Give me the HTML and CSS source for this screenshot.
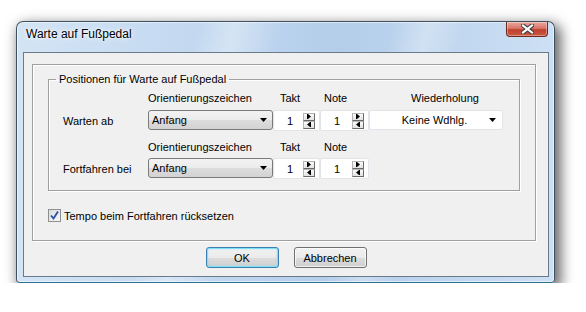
FILE: index.html
```html
<!DOCTYPE html>
<html lang="de">
<head>
    <meta charset="UTF-8">
    <title>Warte auf Fußpedal</title>
    <link rel="stylesheet" href="styles.css">
</head>
<body>
    <div class="window">
        <div class="titlebar">
            <span class="title">Warte auf Fußpedal</span>
            <div class="close">
                <svg width="13" height="10" viewBox="0 0 13 10">
                    <path d="M2 1.5 L11 8.5 M11 1.5 L2 8.5" stroke="#3b3b3b" stroke-width="4.2" stroke-linecap="square"/>
                    <path d="M2 1.5 L11 8.5 M11 1.5 L2 8.5" stroke="#fff" stroke-width="2.2" stroke-linecap="square"/>
                </svg>
            </div>
        </div>

        <div class="client">
            <div class="panel">
                <fieldset class="group">
                    <legend>Positionen für Warte auf Fußpedal</legend>

                    <div class="row head">
                        <span></span>
                        <span>Orientierungszeichen</span>
                        <span class="h-takt">Takt</span>
                        <span class="h-note">Note</span>
                        <span class="h-wdh">Wiederholung</span>
                    </div>
                    <div class="row ctl first">
                        <span class="lbl">Warten ab</span>
                        <div class="combo">
                            <span>Anfang</span>
                            <svg width="7" height="4" viewBox="0 0 7 4"><polygon points="0,0 7,0 3.5,4" fill="#000"/></svg>
                        </div>
                        <div class="spin">
                            <span class="val">1</span>
                            <div class="arrows">
                                <div class="arr"><svg width="4" height="5" viewBox="0 0 4 5"><polygon points="1,0 4,2.5 1,5" fill="#000"/><rect x="0" y="0" width="1" height="5" fill="#000"/></svg></div>
                                <div class="arr"><svg width="4" height="5" viewBox="0 0 4 5"><polygon points="3,0 0,2.5 3,5" fill="#000"/><rect x="3" y="0" width="1" height="5" fill="#000"/></svg></div>
                            </div>
                        </div>
                        <div class="spin">
                            <span class="val">1</span>
                            <div class="arrows">
                                <div class="arr"><svg width="4" height="5" viewBox="0 0 4 5"><polygon points="1,0 4,2.5 1,5" fill="#000"/><rect x="0" y="0" width="1" height="5" fill="#000"/></svg></div>
                                <div class="arr"><svg width="4" height="5" viewBox="0 0 4 5"><polygon points="3,0 0,2.5 3,5" fill="#000"/><rect x="3" y="0" width="1" height="5" fill="#000"/></svg></div>
                            </div>
                        </div>
                        <div class="combo white">
                            <span>Keine Wdhlg.</span>
                            <svg width="7" height="4" viewBox="0 0 7 4"><polygon points="0,0 7,0 3.5,4" fill="#000"/></svg>
                        </div>
                    </div>

                    <div class="row head second">
                        <span></span>
                        <span>Orientierungszeichen</span>
                        <span class="h-takt">Takt</span>
                        <span class="h-note">Note</span>
                    </div>
                    <div class="row ctl">
                        <span class="lbl">Fortfahren bei</span>
                        <div class="combo">
                            <span>Anfang</span>
                            <svg width="7" height="4" viewBox="0 0 7 4"><polygon points="0,0 7,0 3.5,4" fill="#000"/></svg>
                        </div>
                        <div class="spin">
                            <span class="val">1</span>
                            <div class="arrows">
                                <div class="arr"><svg width="4" height="5" viewBox="0 0 4 5"><polygon points="1,0 4,2.5 1,5" fill="#000"/><rect x="0" y="0" width="1" height="5" fill="#000"/></svg></div>
                                <div class="arr"><svg width="4" height="5" viewBox="0 0 4 5"><polygon points="3,0 0,2.5 3,5" fill="#000"/><rect x="3" y="0" width="1" height="5" fill="#000"/></svg></div>
                            </div>
                        </div>
                        <div class="spin">
                            <span class="val">1</span>
                            <div class="arrows">
                                <div class="arr"><svg width="4" height="5" viewBox="0 0 4 5"><polygon points="1,0 4,2.5 1,5" fill="#000"/><rect x="0" y="0" width="1" height="5" fill="#000"/></svg></div>
                                <div class="arr"><svg width="4" height="5" viewBox="0 0 4 5"><polygon points="3,0 0,2.5 3,5" fill="#000"/><rect x="3" y="0" width="1" height="5" fill="#000"/></svg></div>
                            </div>
                        </div>
                    </div>
                </fieldset>

                <div class="check">
                    <span class="box">
                        <svg width="11" height="11" viewBox="0 0 11 11"><path d="M2 5.5 L4.5 8.5 L9 1.5" stroke="#2b4fa8" stroke-width="1.8" fill="none"/></svg>
                    </span>
                    <span>Tempo beim Fortfahren rücksetzen</span>
                </div>
            </div>

            <div class="buttons">
                <button class="btn default">OK</button>
                <button class="btn">Abbrechen</button>
            </div>
        </div>
    </div>
</body>
</html>
```

FILE: styles.css
```css
body {
    margin: 0;
    background-color: #fff;
    font-family: "Liberation Sans", Arial, sans-serif;
    font-size: 11px;
    color: #000;
}
.window {
    margin: 21px 0 0 16px;
    width: 539px;
    height: 262px;
    box-sizing: border-box;
    border: 1px solid #404f5e;
    border-bottom-color: #2f6f93;
    border-radius: 7px 7px 4px 4px;
    padding: 0 5px 5px 6px;
    display: flex;
    flex-direction: column;
    background:
        linear-gradient(105deg, rgba(255,255,255,0) 30%, rgba(255,255,255,.35) 36%, rgba(255,255,255,0) 44%, rgba(255,255,255,0) 62%, rgba(255,255,255,.3) 68%, rgba(255,255,255,0) 74%),
        linear-gradient(90deg, #d3e4f5 0%, #bfd6ef 40%, #b3cdea 60%, #cde0f4 100%);
    box-shadow: inset 0 0 0 1px rgba(255,255,255,.55), 4px 5px 13px 2px rgba(0,0,0,.6);
}
.titlebar {
    height: 30px;
    display: flex;
    justify-content: space-between;
    align-items: flex-start;
}
.title {
    font-size: 12px;
    margin: 5px 0 0 3px;
    text-shadow: 0 0 6px #fff, 0 0 3px #fff;
}
.close {
    width: 42px;
    height: 15px;
    margin-right: 1px;
    box-sizing: border-box;
    border: 1px solid #6e2a22;
    border-top: none;
    border-radius: 0 0 4px 4px;
    background: linear-gradient(#e7a89b 0%, #d9776a 45%, #c0412f 55%, #c95a3f 100%);
    box-shadow: inset 0 0 0 1px rgba(255,255,255,.35);
    display: flex;
    align-items: center;
    justify-content: center;
}
.client {
    flex: 1;
    border: 1px solid #6a7a8a;
    background-color: #f0f0f0;
    padding: 11px 12px 0 8px;
    display: flex;
    flex-direction: column;
}
.panel {
    height: 177px;
    box-sizing: border-box;
    border: 1px solid #a0a0a0;
    box-shadow: inset 1px 1px 0 #fff, 1px 1px 0 #fff;
    padding: 8px 15px 0 15px;
}
.group {
    margin: 0;
    border: 1px solid #a0a0a0;
    box-shadow: inset 1px 1px 0 #fff, 1px 1px 0 #fff;
    padding: 6px 0 12px 14px;
    min-width: 0;
}
.group legend {
    padding: 0 3px;
    margin-left: -7px;
    line-height: 13px;
}
.row {
    display: grid;
    grid-template-columns: 85px 125px 47px 49px 134px;
}
.head {
    height: 13px;
    line-height: 13px;
}
.ctl {
    height: 20px;
    margin-top: 5px;
}
.head.second {
    margin-top: 11px;
}
.row.ctl:last-child {
    margin-top: 4px;
}
.h-takt {
    padding-left: 7px;
}
.h-note {
    padding-left: 4px;
}
.h-wdh {
    padding-left: 42px;
}
.lbl {
    align-self: center;
}
.combo {
    box-sizing: border-box;
    height: 20px;
    border: 1px solid #7a7a7a;
    border-radius: 3px;
    background: linear-gradient(#f3f3f3 0%, #ebebeb 50%, #dddddd 51%, #d2d2d2 100%);
    display: flex;
    align-items: center;
    justify-content: space-between;
    padding: 0 5px 0 3px;
}
.combo.white {
    background: #fff;
    border-color: #e2e4ea;
    border-radius: 2px;
    padding: 0 6px 0 0;
}
.combo.white span {
    flex: 1;
    text-align: center;
    padding-left: 10px;
}
.spin {
    box-sizing: border-box;
    height: 21px;
    border: 1px solid #e2e4ea;
    border-radius: 2px;
    background-color: #fff;
    display: flex;
    align-items: center;
    padding: 0 4px 0 13px;
    justify-content: space-between;
}
.arrows {
    display: flex;
    flex-direction: column;
}
.arr {
    width: 12px;
    height: 8px;
    box-sizing: border-box;
    border: 1px solid #b5b5b5;
    border-right-color: #6a6a6a;
    border-bottom-color: #6a6a6a;
    background: linear-gradient(#fafafa, #e2e2e2);
    display: flex;
    align-items: center;
    justify-content: center;
}
.check {
    display: flex;
    align-items: center;
    margin-top: 18px;
}
.box {
    width: 13px;
    height: 13px;
    box-sizing: border-box;
    border: 1px solid #8e8f8f;
    background: linear-gradient(135deg, #dcdcdc, #f7f7f7);
    display: flex;
    align-items: center;
    justify-content: center;
    margin-right: 3px;
}
.buttons {
    display: flex;
    justify-content: center;
    gap: 15px;
    margin-top: 6px;
    padding-left: 4px;
}
.btn {
    width: 73px;
    height: 21px;
    font-family: "Liberation Sans", Arial, sans-serif;
    font-size: 11px;
    color: #000;
    border: 1px solid #707070;
    border-radius: 3px;
    background: linear-gradient(#f2f2f2 0%, #ebebeb 50%, #dddddd 51%, #cfcfcf 100%);
    box-shadow: inset 0 0 0 1px rgba(255,255,255,.7);
    padding: 0;
}
.btn.default {
    border-color: #3c7fb1;
    box-shadow: inset 0 0 0 1px #7de0f8, inset 0 0 2px 1px rgba(120,220,250,.6);
}
```
